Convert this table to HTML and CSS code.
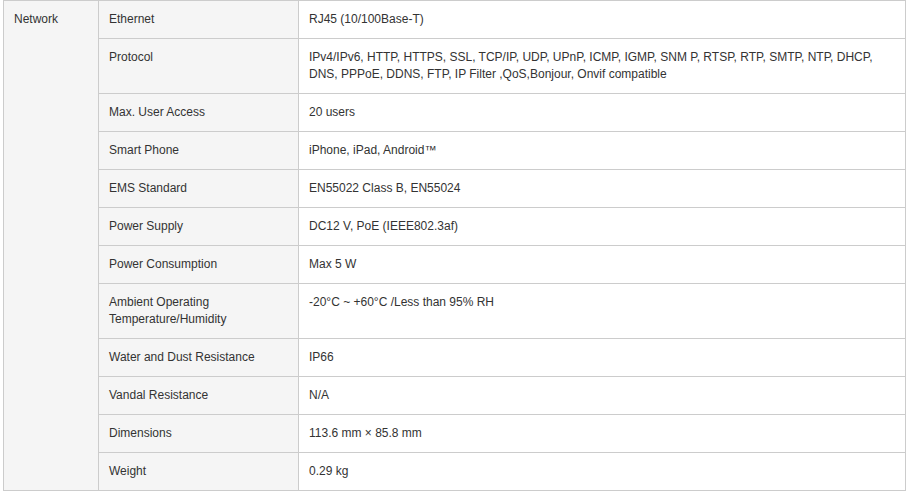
FILE: index.html
```html
<!DOCTYPE html>
<html lang="en">
<head>
<meta charset="utf-8">
<title>Specifications</title>
<link rel="stylesheet" href="styles.css">
</head>
<body>
<div class="wrap">
<table class="spec">
  <colgroup>
    <col class="c-group">
    <col class="c-label">
    <col class="c-value">
  </colgroup>
  <tbody>
    <tr>
      <td class="group" rowspan="12">Network</td>
      <td class="label">Ethernet</td>
      <td class="value">RJ45 (10/100Base-T)</td>
    </tr>
    <tr>
      <td class="label">Protocol</td>
      <td class="value">IPv4/IPv6, HTTP, HTTPS, SSL, TCP/IP, UDP, UPnP, ICMP, IGMP, SNM P, RTSP, RTP, SMTP, NTP, DHCP, DNS, PPPoE, DDNS, FTP, IP Filter ,QoS,Bonjour, Onvif compatible</td>
    </tr>
    <tr>
      <td class="label">Max. User Access</td>
      <td class="value">20 users</td>
    </tr>
    <tr>
      <td class="label">Smart Phone</td>
      <td class="value">iPhone, iPad, Android™</td>
    </tr>
    <tr>
      <td class="label">EMS Standard</td>
      <td class="value">EN55022 Class B, EN55024</td>
    </tr>
    <tr>
      <td class="label">Power Supply</td>
      <td class="value">DC12 V, PoE (IEEE802.3af)</td>
    </tr>
    <tr>
      <td class="label">Power Consumption</td>
      <td class="value">Max 5 W</td>
    </tr>
    <tr>
      <td class="label">Ambient Operating<br>Temperature/Humidity</td>
      <td class="value">-20°C ~ +60°C /Less than 95% RH</td>
    </tr>
    <tr>
      <td class="label">Water and Dust Resistance</td>
      <td class="value">IP66</td>
    </tr>
    <tr>
      <td class="label">Vandal Resistance</td>
      <td class="value">N/A</td>
    </tr>
    <tr>
      <td class="label">Dimensions</td>
      <td class="value">113.6 mm × 85.8 mm</td>
    </tr>
    <tr>
      <td class="label">Weight</td>
      <td class="value">0.29 kg</td>
    </tr>
  </tbody>
</table>
</div>
</body>
</html>
```
FILE: styles.css
```css
html, body {
  margin: 0;
  padding: 0;
  background: #ffffff;
}

body {
  font-family: "Liberation Sans", Arial, Helvetica, sans-serif;
  font-size: 12px;
  line-height: 17px;
  color: #333333;
}

.wrap {
  padding: 0 4px 0 3px;
}

.spec {
  width: 903px;
  border-collapse: collapse;
  table-layout: fixed;
  border: 1px solid #cccccc;
}

.c-group { width: 95px; }
.c-label { width: 200px; }

.spec td {
  border: 1px solid #cccccc;
  padding: 10px;
  vertical-align: top;
  text-align: left;
}

.group,
.label {
  background: #f5f5f5;
}

.value {
  background: #ffffff;
}
```
